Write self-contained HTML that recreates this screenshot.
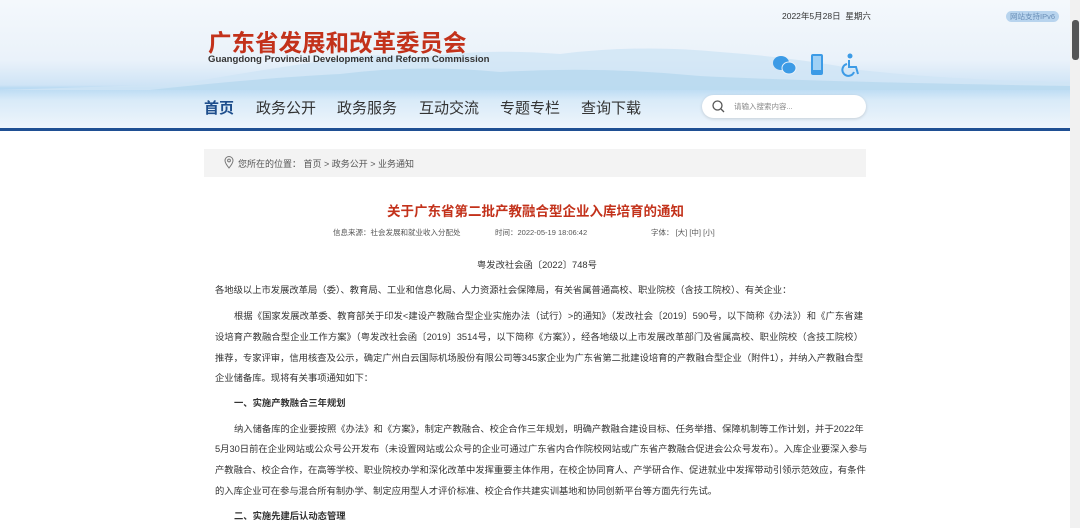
<!DOCTYPE html>
<html><head><meta charset="utf-8"><style>
*{margin:0;padding:0;box-sizing:border-box}
body{width:1080px;height:528px;overflow:hidden;background:#fff;font-family:"Liberation Sans","Noto Sans CJK SC",sans-serif;position:relative;color:#333}
.hdr{position:absolute;left:0;top:0;width:1070px;height:128px;background:linear-gradient(#f4f8fc 0,#eaf2fa 60px,#cfe4f6 85px,#b9daf3 88px,#d8eaf8 100px,#eef5fc 128px)}
.mtn{position:absolute;left:0;top:40px;width:1070px;height:50px}
.line{position:absolute;left:0;top:128px;width:1070px;height:3px;background:#1f4f93}
.sb{position:absolute;left:1070px;top:0;width:10px;height:528px;background:#f1f1f1}
.sb i{position:absolute;left:2px;top:20px;width:7px;height:40px;background:#555;border-radius:3px}
.t{position:absolute;white-space:nowrap}
.logo{left:208px;top:24px;font-size:23.5px;font-weight:bold;color:#c3321b}
.en{left:208px;top:54px;font-size:9.6px;color:#333;font-weight:bold}
.nav{top:97px;font-size:15px;color:#333}
.srch{position:absolute;left:702px;top:95px;width:164px;height:23px;background:#fff;border-radius:12px;box-shadow:0 1px 3px rgba(0,0,0,.15)}
.bc{position:absolute;left:204px;top:149px;width:662px;height:28px;background:#f3f3f3}
.p{position:absolute;left:215px;width:648px;font-size:9.3px;color:#333;white-space:nowrap}
.j{text-align:justify;text-align-last:justify}
</style></head><body>
<div class="hdr">
<svg class="mtn" viewBox="0 0 1070 50" preserveAspectRatio="none"><path d="M0 50 L180 44 Q260 30 330 20 Q370 12 420 18 Q480 8 560 14 Q640 4 720 12 Q800 18 860 30 Q950 40 1070 42 L1070 50Z" fill="#cfe5f5" opacity=".8"/><path d="M150 50 Q260 38 340 34 Q420 24 500 32 Q600 26 700 36 Q820 42 1070 46 L1070 50Z" fill="#b7d8ef" opacity=".8"/></svg>
</div>
<div class="line"></div>
<div class="t" style="left:782px;top:10px;font-size:8.5px;color:#333">2022年5月28日&nbsp; 星期六</div>
<div class="t" style="left:1006px;top:11px;width:53px;height:11px;border-radius:6px;background:#b8d4ee;font-size:7.5px;color:#6a8fb8;text-align:center;line-height:11px">网站支持IPv6</div>
<div class="t logo">广东省发展和改革委员会</div>
<div class="t en">Guangdong Provincial Development and Reform Commission</div>
<svg class="t" style="left:772px;top:54px" width="26" height="22"><ellipse cx="9" cy="9" rx="8" ry="7" fill="#3c9be6"/><ellipse cx="17" cy="14" rx="7" ry="6" fill="#3c9be6" stroke="#eaf2fa"/></svg>
<svg class="t" style="left:810px;top:53px" width="14" height="23"><rect x="1" y="1" width="12" height="21" rx="2" fill="#3c9be6"/><rect x="3" y="3" width="8" height="14" fill="#9fd0f5"/></svg>
<svg class="t" style="left:840px;top:53px" width="22" height="24"><circle cx="10" cy="3" r="2.5" fill="#3c9be6"/><path d="M9 7 V14 H16 L18 21 M7 11 A6 6 0 1 0 14 19" fill="none" stroke="#3c9be6" stroke-width="2"/></svg>
<div class="t nav" style="left:204px;color:#1e4e8c;font-weight:bold">首页</div>
<div class="t nav" style="left:256px">政务公开</div>
<div class="t nav" style="left:337px">政务服务</div>
<div class="t nav" style="left:419px">互动交流</div>
<div class="t nav" style="left:500px">专题专栏</div>
<div class="t nav" style="left:581px">查询下载</div>
<div class="srch"><svg style="position:absolute;left:10px;top:5px" width="13" height="13"><circle cx="5.5" cy="5.5" r="4.5" fill="none" stroke="#555" stroke-width="1.3"/><path d="M9 9 L12 12" stroke="#555" stroke-width="1.3"/></svg><span style="position:absolute;left:32px;top:6px;font-size:7.5px;color:#888">请输入搜索内容...</span></div>
<div class="bc"><svg style="position:absolute;left:20px;top:7px" width="10" height="13"><path d="M5 12 C1 7 1 5 1 4.5 A4 4 0 0 1 9 4.5 C9 5 9 7 5 12Z" fill="none" stroke="#777"/><circle cx="5" cy="4.5" r="1.4" fill="none" stroke="#777"/></svg><span style="position:absolute;left:34px;top:8px;font-size:9px;color:#555">您所在的位置： 首页 &gt; 政务公开 &gt; 业务通知</span></div>
<div class="t" style="left:387px;top:200px;font-size:13.5px;font-weight:bold;color:#c3321b">关于广东省第二批产教融合型企业入库培育的通知</div>
<div class="t" style="left:333px;top:227px;font-size:7.5px;color:#555">信息来源：社会发展和就业收入分配处</div>
<div class="t" style="left:495px;top:227px;font-size:7.5px;color:#555">时间：2022-05-19 18:06:42</div>
<div class="t" style="left:651px;top:227px;font-size:7.5px;color:#555">字体： [大] [中] [小]</div>
<div class="t" style="left:477px;top:257px;font-size:9.3px;color:#333">粤发改社会函〔2022〕748号</div>
<div class="p" style="top:282px">各地级以上市发展改革局（委）、教育局、工业和信息化局、人力资源社会保障局，有关省属普通高校、职业院校（含技工院校）、有关企业：</div>
<div class="p j" style="top:308px;padding-left:19px">根据《国家发展改革委、教育部关于印发&lt;建设产教融合型企业实施办法（试行）&gt;的通知》（发改社会〔2019〕590号，以下简称《办法》）和《广东省建</div>
<div class="p j" style="top:329px">设培育产教融合型企业工作方案》（粤发改社会函〔2019〕3514号，以下简称《方案》），经各地级以上市发展改革部门及省属高校、职业院校（含技工院校）</div>
<div class="p j" style="top:350px">推荐，专家评审，信用核查及公示，确定广州白云国际机场股份有限公司等345家企业为广东省第二批建设培育的产教融合型企业（附件1），并纳入产教融合型</div>
<div class="p" style="top:370px">企业储备库。现将有关事项通知如下：</div>
<div class="p" style="top:395px;padding-left:19px;font-weight:bold">一、实施产教融合三年规划</div>
<div class="p j" style="top:421px;padding-left:19px">纳入储备库的企业要按照《办法》和《方案》，制定产教融合、校企合作三年规划，明确产教融合建设目标、任务举措、保障机制等工作计划，并于2022年</div>
<div class="p j" style="top:441px">5月30日前在企业网站或公众号公开发布（未设置网站或公众号的企业可通过广东省内合作院校网站或广东省产教融合促进会公众号发布）。入库企业要深入参与</div>
<div class="p j" style="top:462px">产教融合、校企合作，在高等学校、职业院校办学和深化改革中发挥重要主体作用，在校企协同育人、产学研合作、促进就业中发挥带动引领示范效应，有条件</div>
<div class="p" style="top:483px">的入库企业可在参与混合所有制办学、制定应用型人才评价标准、校企合作共建实训基地和协同创新平台等方面先行先试。</div>
<div class="p" style="top:508px;padding-left:19px;font-weight:bold">二、实施先建后认动态管理</div>
<div class="sb"><i></i></div>
</body></html>
